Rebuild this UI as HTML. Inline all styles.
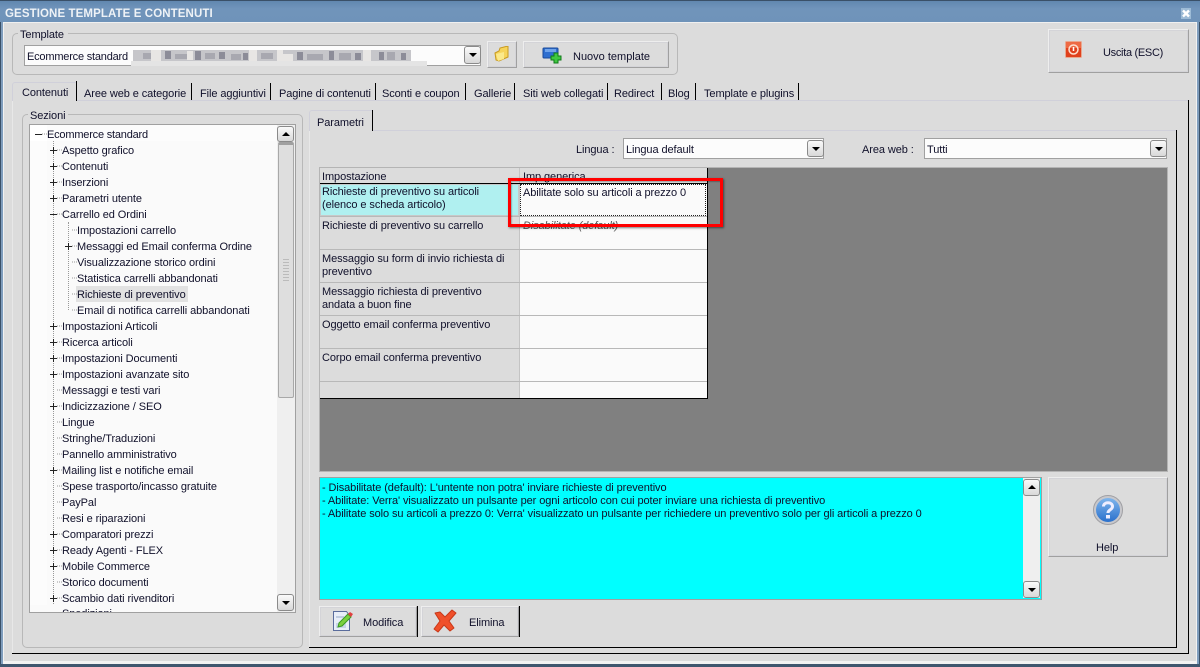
<!DOCTYPE html>
<html><head><meta charset="utf-8"><title>Gestione template e contenuti</title>
<style>
html,body{margin:0;padding:0;background:#dcdcdc}
#w{position:relative;width:1200px;height:667px;overflow:hidden;background:#dcdcdc;font-family:"Liberation Sans",sans-serif;font-size:11px;letter-spacing:-.09px;color:#10102a}
#w div,#w span.t{position:absolute;box-sizing:border-box}
.t{white-space:nowrap;line-height:14px;position:absolute;margin-top:1px}
.btn{background:#dcdcdc;border:1px solid;border-color:#eeeeee #a0a0a0 #a0a0a0 #eeeeee;box-shadow:inset 0 0 0 1px #d4d4d8}
.combo{background:#fcfcfc;border:1px solid #a0a0a0}
.ar{width:17px;height:18px;background:linear-gradient(#fafafa,#d8d8d8);border:1px solid #8a8a8a;border-radius:3px}
.ar:after{content:"";position:absolute;left:4px;top:6px;border-left:4px solid transparent;border-right:4px solid transparent;border-top:4px solid #000}
.ar.up:after{border-top:0;border-bottom:4px solid #000;top:5px}
.hl{background:#d0d0da;height:1px}
.gl{background:#b8b8b8}
</style></head><body>
<div id="w">
<!-- window frame -->
<div style="left:0;top:0;width:1200px;height:22px;background:linear-gradient(#5f86ae,#7094bb 40%,#6f93b9)"></div>
<div style="left:0;top:0;width:1200px;height:1px;background:#3a5068"></div>
<div style="left:0;top:22px;width:1px;height:645px;background:#3a5068"></div>
<div style="left:1px;top:22px;width:2px;height:645px;background:#7f9dbd"></div>
<div style="left:3px;top:22px;width:1px;height:640px;background:#f2f2f2"></div>
<div style="left:1199px;top:22px;width:1px;height:645px;background:#3a5068"></div>
<div style="left:1197px;top:22px;width:2px;height:645px;background:#7f9dbd"></div>
<div style="left:1196px;top:22px;width:1px;height:640px;background:#f2f2f2"></div>
<div style="left:4px;top:22px;width:1192px;height:1px;background:#f0f0f0"></div>
<div style="left:3px;top:661px;width:1194px;height:3px;background:#f2f2f2"></div>
<div style="left:0;top:664px;width:1200px;height:3px;background:#3f566e"></div>
<span class="t" style="left:5px;top:6px;color:#eef2f6;font-weight:bold;font-size:11.5px;letter-spacing:.1px">GESTIONE TEMPLATE E CONTENUTI</span>
<svg style="position:absolute;left:1180px;top:7px" width="13" height="13"><rect x="1" y="1" width="10" height="11" fill="#9dbbd6"/><path d="M3 3.500l6 6M9 3.500l-6 6" stroke="#fff" stroke-width="2.400"/></svg>

<!-- Template group -->
<div style="left:12px;top:33px;width:666px;height:42px;border:1px solid #b8b8b8;border-radius:5px"></div>
<div style="left:18px;top:28px;width:50px;height:12px;background:#dcdcdc"></div>
<span class="t" style="left:20px;top:27px">Template</span>
<div class="combo" style="left:24px;top:45px;width:457px;height:21px"></div>
<span class="t" style="left:27px;top:49px;letter-spacing:-.2px">Ecommerce standard</span>
<svg style="position:absolute;left:131px;top:50px" width="296" height="16">
<rect x="2" y="0" width="278" height="11" fill="#c6c6ca"/>
<rect x="0" y="11" width="296" height="5" fill="#e4e4e4"/>
<g fill="#8c8c98"><rect x="34" y="1" width="6" height="8"/><rect x="64" y="1" width="6" height="9"/><rect x="88" y="2" width="6" height="7"/><rect x="112" y="3" width="5" height="7"/><rect x="166" y="2" width="6" height="8"/><rect x="198" y="1" width="5" height="9"/><rect x="224" y="3" width="6" height="7"/><rect x="248" y="2" width="5" height="8"/><rect x="270" y="3" width="5" height="7"/></g>
<g fill="#a8a8b0"><rect x="12" y="3" width="8" height="6"/><rect x="44" y="4" width="12" height="5"/><rect x="74" y="3" width="10" height="6"/><rect x="100" y="4" width="10" height="6"/><rect x="130" y="3" width="12" height="6"/><rect x="176" y="4" width="16" height="6"/><rect x="208" y="3" width="12" height="7"/><rect x="256" y="2" width="8" height="8"/></g>
<g fill="#e8e6e4"><rect x="20" y="0" width="10" height="11"/><rect x="56" y="1" width="6" height="9"/><rect x="118" y="0" width="8" height="11"/><rect x="146" y="0" width="6" height="11"/><rect x="152" y="4" width="10" height="7"/><rect x="232" y="0" width="8" height="11"/></g>
</svg>
<div class="ar" style="left:464px;top:46px"></div>
<div class="btn" style="left:487px;top:41px;width:30px;height:27px"></div>
<svg style="position:absolute;left:494px;top:46px" width="16" height="16"><path d="M1 7l4-2 1-3 8-2v11l-9 4-3-1z" fill="#f6d45a" stroke="#c89a20"/><path d="M2 8l8-2v7l-6 2z" fill="#fbe98c"/></svg>
<div class="btn" style="left:523px;top:41px;width:146px;height:27px"></div>
<svg style="position:absolute;left:542px;top:47px" width="20" height="17"><rect x="1" y="1" width="15" height="10" rx="1" fill="#2f6fd0" stroke="#1a4a9a"/><rect x="3" y="2" width="11" height="3" fill="#6fa3ea"/><path d="M9 9h3V6h4v3h3v4h-3v3h-4v-3H9z" fill="#3fc83f" stroke="#0f7a1a"/></svg>
<span class="t" style="left:573px;top:49px;letter-spacing:0">Nuovo template</span>
<div class="btn" style="left:1048px;top:29px;width:141px;height:44px"></div>
<svg style="position:absolute;left:1065px;top:41px" width="18" height="18"><rect x=".5" y=".5" width="16" height="16" rx="1" fill="#e0401c" stroke="#e8a890"/><rect x="1" y="1" width="15" height="6" fill="#ee6a44"/><circle cx="8.500" cy="8.500" r="4.500" fill="none" stroke="#fde0d0" stroke-width="1.500"/><path d="M8.500 6v4" stroke="#fff" stroke-width="1.500"/></svg>
<span class="t" style="left:1103px;top:45px;letter-spacing:-.3px">Uscita (ESC)</span>

<!-- outer tab page -->
<div class="hl" style="left:12px;top:100px;width:1176px"></div>
<div style="left:1188px;top:100px;width:1px;height:554px;background:#000"></div>
<div style="left:12px;top:653px;width:1177px;height:1px;background:#000"></div>
<div style="left:12px;top:100px;width:1px;height:553px;background:#e8e8e8"></div>
<div style="left:12px;top:82px;width:65px;height:19px;background:#dcdcdc;border-top:1px solid #d0d0da;border-left:1px solid #d0d0da;border-top-left-radius:3px"></div>
<div style="left:76px;top:81px;width:1px;height:20px;background:#000"></div>
<span class="t" style="left:22px;top:85px">Contenuti</span>
<span class="t" style="left:84px;top:86px">Aree web e categorie</span>
<div style="left:191px;top:83px;width:1px;height:17px;background:#000"></div>
<span class="t" style="left:200px;top:86px">File aggiuntivi</span>
<div style="left:270px;top:83px;width:1px;height:17px;background:#000"></div>
<span class="t" style="left:279px;top:86px">Pagine di contenuti</span>
<div style="left:375px;top:83px;width:1px;height:17px;background:#000"></div>
<span class="t" style="left:382px;top:86px">Sconti e coupon</span>
<div style="left:465px;top:83px;width:1px;height:17px;background:#000"></div>
<span class="t" style="left:474px;top:86px">Gallerie</span>
<div style="left:514px;top:83px;width:1px;height:17px;background:#000"></div>
<span class="t" style="left:523px;top:86px">Siti web collegati</span>
<div style="left:607px;top:83px;width:1px;height:17px;background:#000"></div>
<span class="t" style="left:614px;top:86px">Redirect</span>
<div style="left:661px;top:83px;width:1px;height:17px;background:#000"></div>
<span class="t" style="left:668px;top:86px">Blog</span>
<div style="left:695px;top:83px;width:1px;height:17px;background:#000"></div>
<span class="t" style="left:704px;top:86px">Template e plugins</span>
<div style="left:798px;top:83px;width:1px;height:17px;background:#000"></div>

<!-- Sezioni -->
<div style="left:22px;top:114px;width:281px;height:534px;border:1px solid #b8b8b8;border-radius:5px"></div>
<div style="left:28px;top:110px;width:40px;height:10px;background:#dcdcdc"></div>
<span class="t" style="left:30px;top:108px">Sezioni</span>
<div style="left:29px;top:124px;width:267px;height:489px;background:#fcfcfc;border:1px solid #a0a0a0;overflow:hidden" id="tree">
<div style="left:0;top:0;width:17px;height:16px;background:#fff"></div>
<div style="left:17px;top:16px;width:247px;height:471px;background:#fafafa"></div>
<div style="left:23px;top:16px;width:0;height:471px;border-left:1px dotted #999"></div>
<div style="left:38px;top:97px;width:0;height:88px;border-left:1px dotted #999"></div>
<div style="left:46px;top:161px;width:112px;height:16px;background:#e2e2e2"></div>
</div>
<svg style="position:absolute;left:30px;top:125px" width="60" height="490" fill="none" stroke="#999" stroke-dasharray="1 1">
<path d="M12 9h5M27 25h5M27 41h5M27 57h5M27 73h5M27 89h5M42 105h5M42 121h5M42 137h5M42 153h5M42 169h5M42 185h5M27 201h5M27 217h5M27 233h5M27 249h5M27 265h5M27 281h5M27 297h5M27 313h5M27 329h5M27 345h5M27 361h5M27 377h5M27 393h5M27 409h5M27 425h5M27 441h5M27 457h5M27 473h5"/>
</svg>
<svg style="position:absolute;left:30px;top:125px" width="60" height="490" stroke="#222" fill="none">
<path d="M5 9.500h7"/>
<path d="M20 25.500h7M23.500 22v7M20 41.500h7M23.500 38v7M20 57.500h7M23.500 54v7M20 73.500h7M23.500 70v7M20 89.500h7M35 121.500h7M38.500 118v7M20 201.500h7M23.500 198v7M20 217.500h7M23.500 214v7M20 233.500h7M23.500 230v7M20 249.500h7M23.500 246v7M20 281.500h7M23.500 278v7M20 345.500h7M23.500 342v7M20 409.500h7M23.500 406v7M20 425.500h7M23.500 422v7M20 441.500h7M23.500 438v7M20 473.500h7M23.500 470v7"/>
</svg>
<span class="t" style="left:47px;top:127px;letter-spacing:-.2px">Ecommerce standard</span>
<span class="t" style="left:62px;top:143px">Aspetto grafico</span>
<span class="t" style="left:62px;top:159px">Contenuti</span>
<span class="t" style="left:62px;top:175px">Inserzioni</span>
<span class="t" style="left:62px;top:191px">Parametri utente</span>
<span class="t" style="left:62px;top:207px">Carrello ed Ordini</span>
<span class="t" style="left:77px;top:223px">Impostazioni carrello</span>
<span class="t" style="left:77px;top:239px">Messaggi ed Email conferma Ordine</span>
<span class="t" style="left:77px;top:255px">Visualizzazione storico ordini</span>
<span class="t" style="left:77px;top:271px">Statistica carrelli abbandonati</span>
<span class="t" style="left:77px;top:287px">Richieste di preventivo</span>
<span class="t" style="left:77px;top:303px">Email di notifica carrelli abbandonati</span>
<span class="t" style="left:62px;top:319px">Impostazioni Articoli</span>
<span class="t" style="left:62px;top:335px">Ricerca articoli</span>
<span class="t" style="left:62px;top:351px">Impostazioni Documenti</span>
<span class="t" style="left:62px;top:367px">Impostazioni avanzate sito</span>
<span class="t" style="left:62px;top:383px">Messaggi e testi vari</span>
<span class="t" style="left:62px;top:399px">Indicizzazione / SEO</span>
<span class="t" style="left:62px;top:415px">Lingue</span>
<span class="t" style="left:62px;top:431px">Stringhe/Traduzioni</span>
<span class="t" style="left:62px;top:447px">Pannello amministrativo</span>
<span class="t" style="left:62px;top:463px">Mailing list e notifiche email</span>
<span class="t" style="left:62px;top:479px">Spese trasporto/incasso gratuite</span>
<span class="t" style="left:62px;top:495px">PayPal</span>
<span class="t" style="left:62px;top:511px">Resi e riparazioni</span>
<span class="t" style="left:62px;top:527px">Comparatori prezzi</span>
<span class="t" style="left:62px;top:543px">Ready Agenti - FLEX</span>
<span class="t" style="left:62px;top:559px">Mobile Commerce</span>
<span class="t" style="left:62px;top:575px">Storico documenti</span>
<span class="t" style="left:62px;top:591px">Scambio dati rivenditori</span>
<div style="left:30px;top:605px;width:247px;height:7px;overflow:hidden;background:#fafafa"><span class="t" style="left:32px;top:1px">Spedizioni</span></div>
<!-- tree scrollbar -->
<div style="left:277px;top:125px;width:18px;height:487px;background:#efefef"></div>
<div class="ar up" style="left:277px;top:126px;height:16px"></div>
<div style="left:278px;top:142px;width:16px;height:256px;background:#dedede;border:1px solid #a8a8a8;border-top:3px solid #a0a0a0;border-radius:2px"></div>
<div style="left:283px;top:259px;width:6px;height:22px;background:repeating-linear-gradient(#bbb 0 1px,transparent 1px 3px)"></div>
<div class="ar" style="left:277px;top:594px;height:17px"></div>

<!-- inner tab -->
<div style="left:309px;top:130px;width:868px;height:1px;background:#d0d0da"></div>
<div style="left:309px;top:130px;width:1px;height:517px;background:#e8e8e8"></div>
<div style="left:1176px;top:130px;width:1px;height:518px;background:#000"></div>
<div style="left:309px;top:647px;width:868px;height:1px;background:#000"></div>
<div style="left:309px;top:110px;width:63px;height:21px;background:#dcdcdc;border-top:1px solid #d0d0da;border-left:1px solid #d0d0da;border-top-left-radius:3px"></div>
<div style="left:372px;top:110px;width:1px;height:21px;background:#000"></div>
<span class="t" style="left:317px;top:115px">Parametri</span>

<span class="t" style="left:576px;top:142px">Lingua :</span>
<div class="combo" style="left:623px;top:138px;width:201px;height:21px"></div>
<span class="t" style="left:626px;top:142px">Lingua default</span>
<div class="ar" style="left:807px;top:140px;height:17px"></div>
<span class="t" style="left:862px;top:142px">Area web :</span>
<div class="combo" style="left:924px;top:138px;width:243px;height:21px"></div>
<span class="t" style="left:927px;top:142px">Tutti</span>
<div class="ar" style="left:1150px;top:140px;height:17px"></div>

<!-- grey area + grid -->
<div style="left:319px;top:167px;width:849px;height:305px;background:#808080;border:1px solid #b4b4b4"></div>
<div style="left:320px;top:168px;width:388px;height:231px;background:#dcdcdc;border-right:1px solid #000;border-bottom:1px solid #000"></div>
<div style="left:520px;top:184px;width:187px;height:214px;background:#fafafa"></div>
<div style="left:519px;top:168px;width:1px;height:230px;background:#c4c4c4"></div>
<div style="left:320px;top:183px;width:387px;height:1px;background:#000"></div>
<div style="left:320px;top:184px;width:199px;height:32px;background:#b0f0f0;border:1px solid #c8c8c8"></div>
<div class="gl" style="left:320px;top:216px;width:387px;height:1px"></div>
<div class="gl" style="left:320px;top:249px;width:387px;height:1px"></div>
<div class="gl" style="left:320px;top:282px;width:387px;height:1px"></div>
<div class="gl" style="left:320px;top:315px;width:387px;height:1px"></div>
<div class="gl" style="left:320px;top:348px;width:387px;height:1px"></div>
<div class="gl" style="left:320px;top:381px;width:387px;height:1px"></div>
<div style="left:520px;top:184px;width:186px;height:32px;border:1px dotted #222"></div>
<span class="t" style="left:322px;top:169px">Impostazione</span>
<span class="t" style="left:523px;top:169px">Imp.generica</span>
<span class="t" style="left:322px;top:185px;line-height:13px">Richieste di preventivo su articoli<br>(elenco e scheda articolo)</span>
<span class="t" style="left:322px;top:218px">Richieste di preventivo su carrello</span>
<span class="t" style="left:322px;top:252px;line-height:13px">Messaggio su form di invio richiesta di<br>preventivo</span>
<span class="t" style="left:322px;top:285px;line-height:13px">Messaggio richiesta di preventivo<br>andata a buon fine</span>
<span class="t" style="left:322px;top:317px">Oggetto email conferma preventivo</span>
<span class="t" style="left:322px;top:350px">Corpo email conferma preventivo</span>
<span class="t" style="left:523px;top:185px">Abilitate solo su articoli a prezzo 0</span>
<span class="t" style="left:523px;top:218px;font-style:italic;color:#555">Disabilitate (default)</span>
<div style="left:508px;top:178px;width:215px;height:49px;border:3px solid #f00;box-shadow:1px 1px 2px rgba(0,0,0,.5),inset 1px 1px 1px rgba(0,0,0,.25)"></div>

<!-- cyan -->
<div style="left:319px;top:477px;width:723px;height:123px;background:#0ff;border:1px solid #a0a0a0"></div>
<span class="t" style="left:322px;top:481px;line-height:13px">- Disabilitate (default): L'untente non potra' inviare richieste di preventivo<br>- Abilitate: Verra' visualizzato un pulsante per ogni articolo con cui poter inviare una richiesta di preventivo<br>- Abilitate solo su articoli a prezzo 0: Verra' visualizzato un pulsante per richiedere un preventivo solo per gli articoli a prezzo 0</span>
<div style="left:1023px;top:478px;width:17px;height:120px;background:#efefef"></div>
<div class="ar up" style="left:1023px;top:479px;height:17px"></div>
<div class="ar" style="left:1023px;top:581px;height:17px"></div>

<!-- help -->
<div class="btn" style="left:1048px;top:477px;width:120px;height:80px"></div>
<svg style="position:absolute;left:1092px;top:494px" width="32" height="32"><defs><linearGradient id="h" x1="0" y1="0" x2="0" y2="1"><stop offset="0" stop-color="#7fb5ec"/><stop offset="1" stop-color="#2a70cc"/></linearGradient></defs><circle cx="16" cy="16" r="14.500" fill="#c8c8cc" stroke="#a0a0a4"/><circle cx="16" cy="16" r="12" fill="url(#h)"/><path d="M11.500 12.500c0-5 9-5 9 0 0 3.500-4.500 3-4.500 6.500" fill="none" stroke="#eef" stroke-width="3"/><rect x="14" y="21" width="4" height="3.500" fill="#eef"/></svg>
<span class="t" style="left:1096px;top:540px">Help</span>

<!-- bottom buttons -->
<div class="btn" style="left:319px;top:606px;width:98px;height:31px"></div>
<div style="left:417px;top:606px;width:1px;height:31px;background:#000"></div>
<svg style="position:absolute;left:332px;top:609px" width="22" height="24"><path d="M1.500 2.500h13l3 4v15h-16z" fill="#e8eef8" stroke="#5a6c9c"/><rect x="4" y="7" width="8" height="2" fill="#c0cce0"/><rect x="4" y="14" width="10" height="5" fill="#c8d4e8"/><path d="M6 18l1-4 9-9 3 3-9 9z" fill="#7cd040" stroke="#3a9a20"/><path d="M16 5l2-2 3 2-2 3z" fill="#e04040"/></svg>
<span class="t" style="left:363px;top:615px">Modifica</span>
<div class="btn" style="left:421px;top:606px;width:98px;height:31px"></div>
<div style="left:519px;top:606px;width:1px;height:31px;background:#000"></div>
<svg style="position:absolute;left:433px;top:609px" width="24" height="24"><path d="M2 4l5-1 5 5 7-7 4 3-7 8 5 7-4 3-6-6-6 7-4-3 6-8z" fill="#f0502a" stroke="#c83818" stroke-linejoin="round"/></svg>
<span class="t" style="left:469px;top:615px">Elimina</span>
</div>
</body></html>
